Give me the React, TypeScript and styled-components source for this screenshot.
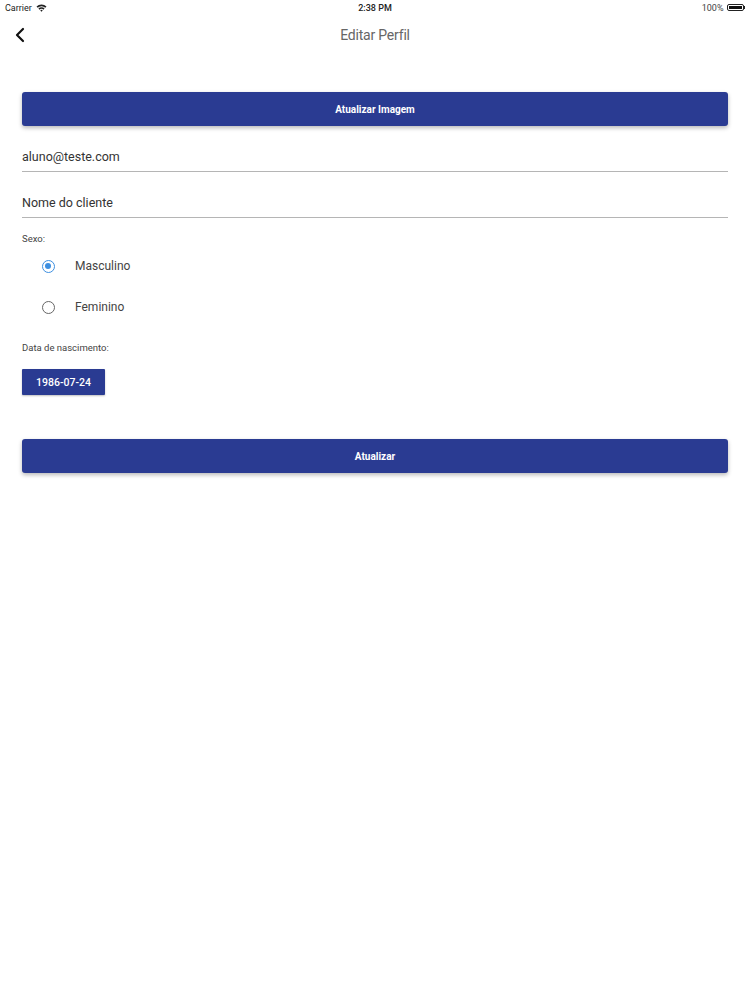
import React from "react";
import styled, { createGlobalStyle } from "styled-components";

const Global = createGlobalStyle`
  html, body { margin: 0; padding: 0; background: #fff; }
  body { font-family: Roboto, "Liberation Sans", sans-serif; color: #333; }
`;

export default function App() {
  return (
    <Screen>
      <Global />
      <StatusBar>
        <StatusLeft>
          Carrier
          <svg width="11" height="8" viewBox="0 0 11 8">
            <path d="M0.5 2.6 A7 7 0 0 1 10.5 2.6 L9.3 3.8 A5.3 5.3 0 0 0 1.7 3.8 Z" fill="#222" />
            <path d="M2.4 4.5 A4.3 4.3 0 0 1 8.6 4.5 L7.4 5.7 A2.6 2.6 0 0 0 3.6 5.7 Z" fill="#222" />
            <path d="M4.3 6.4 A1.7 1.7 0 0 1 6.7 6.4 L5.5 7.7 Z" fill="#222" />
          </svg>
        </StatusLeft>
        <StatusCenter>2:38 PM</StatusCenter>
        <StatusRight>
          100%
          <Battery>
            <BatteryFill />
          </Battery>
          <BatteryTip />
        </StatusRight>
      </StatusBar>
      <Header>
        <BackButton>
          <svg width="14" height="16" viewBox="0 0 14 16">
            <path d="M10 2 L4 8 L10 14" fill="none" stroke="#111" strokeWidth="2.2" strokeLinecap="round" strokeLinejoin="round" />
          </svg>
        </BackButton>
        <Title>Editar Perfil</Title>
      </Header>
      <Form>
        <PrimaryButton>Atualizar Imagem</PrimaryButton>
        <Field>aluno@teste.com</Field>
        <Field>Nome do cliente</Field>
        <Label>Sexo:</Label>
        <Radios>
          <RadioRow>
            <RadioCircle $checked />
            Masculino
          </RadioRow>
          <RadioRow>
            <RadioCircle />
            Feminino
          </RadioRow>
        </Radios>
        <Label>Data de nascimento:</Label>
        <DateButton>1986-07-24</DateButton>
        <PrimaryButton $top={44}>Atualizar</PrimaryButton>
      </Form>
    </Screen>
  );
}

const Screen = styled.div`
  width: 750px;
  min-height: 1000px;
  background: #fff;
`;

const StatusBar = styled.div`
  height: 15px;
  display: grid;
  grid-template-columns: 1fr auto 1fr;
  align-items: center;
  padding: 0 5px;
  font-size: 9px;
  color: #222;
`;

const StatusLeft = styled.div`
  display: flex;
  align-items: center;
  gap: 4px;
`;

const StatusCenter = styled.div`
  font-weight: 500;
`;

const StatusRight = styled.div`
  display: flex;
  align-items: center;
  justify-content: flex-end;
  color: #444;
`;

const Battery = styled.div`
  margin-left: 3px;
  width: 17px;
  height: 7px;
  border: 1px solid #222;
  border-radius: 2px;
  padding: 1px;
  box-sizing: border-box;
`;

const BatteryFill = styled.div`
  width: 100%;
  height: 100%;
  background: #111;
`;

const BatteryTip = styled.div`
  width: 1.5px;
  height: 3px;
  background: #222;
`;

const Header = styled.div`
  height: 40px;
  display: flex;
  align-items: center;
  justify-content: center;
  position: relative;
`;

const BackButton = styled.div`
  position: absolute;
  left: 13px;
  top: 12px;
  display: flex;
`;

const Title = styled.div`
  font-size: 14px;
  color: #666;
  letter-spacing: -0.2px;
`;

const Form = styled.div`
  padding: 37px 22px 0;
  display: flex;
  flex-direction: column;
`;

const PrimaryButton = styled.div<{ $top?: number }>`
  margin-top: ${(p) => p.$top ?? 0}px;
  height: 34px;
  display: flex;
  align-items: center;
  justify-content: center;
  background: #2a3b92;
  color: #fff;
  font-size: 10px;
  font-weight: 700;
  border-radius: 3px;
  box-shadow: 0 2px 4px rgba(0, 0, 0, 0.28);
`;

const Field = styled.div`
  height: 46px;
  box-sizing: border-box;
  padding-top: 23px;
  font-size: 12.5px;
  color: #333;
  border-bottom: 1.5px solid #b5b5b5;
`;

const Label = styled.div`
  margin-top: 15px;
  font-size: 9.5px;
  color: #444;
`;

const Radios = styled.div`
  display: flex;
  flex-direction: column;
  gap: 27px;
  padding: 15px 0 0 20px;
  margin-bottom: 13px;
`;

const RadioRow = styled.div`
  display: flex;
  align-items: center;
  gap: 20px;
  font-size: 12px;
  color: #444;
  height: 14px;
`;

const RadioCircle = styled.div<{ $checked?: boolean }>`
  width: 13px;
  height: 13px;
  box-sizing: border-box;
  border-radius: 50%;
  border: 1.5px solid ${(p) => (p.$checked ? "#3d8fe0" : "#666")};
  position: relative;
  &::after {
    content: "";
    display: ${(p) => (p.$checked ? "block" : "none")};
    position: absolute;
    left: 2px;
    top: 2px;
    width: 6px;
    height: 6px;
    border-radius: 50%;
    background: #3d8fe0;
  }
`;

const DateButton = styled.div`
  margin-top: 16px;
  width: 83px;
  height: 26px;
  display: flex;
  align-items: center;
  justify-content: center;
  background: #2a3b92;
  color: #fff;
  font-size: 10.5px;
  font-weight: 500;
  border-radius: 1px;
  box-shadow: 0 1px 2px rgba(0, 0, 0, 0.25);
`;
